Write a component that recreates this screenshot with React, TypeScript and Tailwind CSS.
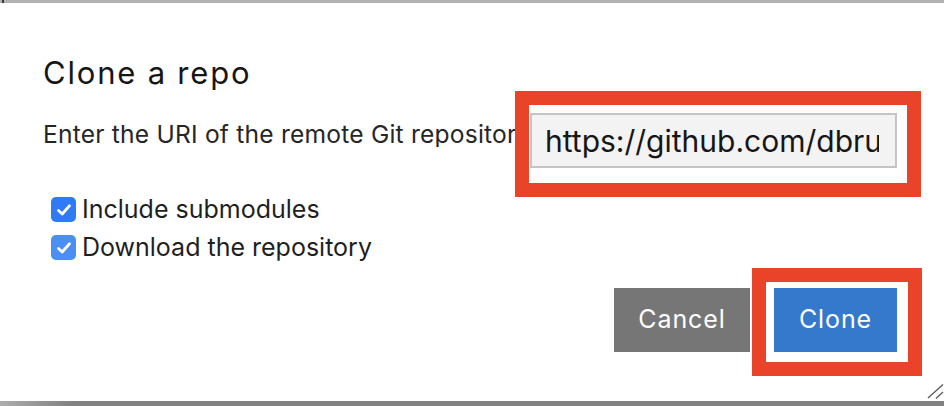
import React from "react";

const REPO_URL = "https://github.com/dbrunton/notebooks.git";

export default function App() {
  return (
    <div className="w-[944px] h-[406px] flex flex-col bg-white font-['Inter',sans-serif] overflow-hidden">
      {/* top edge of the window behind */}
      <div className="h-[3px] shrink-0 flex bg-[#b2b2b2]">
        <div className="w-[2px] ml-[2px] bg-[#3a3a3a]" />
      </div>

      {/* Dialog body */}
      <div className="relative flex-1 flex flex-col pl-[43px]">
        <h1 className="mt-[54px] text-[31px] leading-[31px] tracking-[1.8px] text-[#161616] font-normal">
          Clone a repo
        </h1>

        {/* URI row */}
        <div className="mt-[3px] flex items-start">
          <p className="w-[472px] shrink-0 overflow-hidden whitespace-nowrap mt-[31px] text-[24.6px] leading-[25px] tracking-[0.2px] text-[#262626]">
            Enter the URI of the remote Git repository:
          </p>
          <div className="border-[14px] border-[#e9432a] pl-[1px] pr-[10px] pt-[8px] pb-[15px]">
            <input
              readOnly
              value={REPO_URL}
              className="w-[367px] h-[55px] border-2 border-[#c4c4c4] bg-[#f3f3f3] pl-[13px] pr-[16px] text-[30px] text-[#161616] outline-none font-['Inter',sans-serif]"
            />
          </div>
        </div>

        {/* Options */}
        <div className="mt-0 ml-[8px] flex flex-col gap-[13px]">
          <CheckRow label="Include submodules" color="bg-[#2f7bf5]" />
          <CheckRow label="Download the repository" color="bg-[#4a8ef6]" />
        </div>

        {/* Actions */}
        <div className="mt-[8px] mr-[22px] flex justify-end items-start">
          <button className="mt-[20px] w-[136px] h-[64px] bg-[#767676] text-white text-[25px] tracking-[0.9px] font-['Inter',sans-serif]">
            Cancel
          </button>
          <div className="ml-[2px] border-[14px] border-[#e9432a] pl-[8px] pr-[11px] pt-[6px] pb-[10px]">
            <button className="w-[123px] h-[64px] bg-[#3579cd] text-white text-[25px] tracking-[0.9px] font-['Inter',sans-serif]">
              Clone
            </button>
          </div>
        </div>

        {/* resize grip */}
        <svg
          className="absolute right-0 bottom-[1px]"
          width="17"
          height="17"
          viewBox="0 0 17 17"
          fill="none"
        >
          <line x1="1" y1="15" x2="16" y2="1.5" stroke="#5a5a5a" strokeWidth="1.3" />
          <line x1="9" y1="15.5" x2="16" y2="9" stroke="#5a5a5a" strokeWidth="1.3" />
        </svg>
      </div>

      {/* bottom edge */}
      <div className="h-[5px] shrink-0 bg-[linear-gradient(to_right,#adadad,#828282_70px)]" />
    </div>
  );
}

function CheckRow({ label, color }: { label: string; color: string }) {
  return (
    <label className="flex items-center gap-[6px] h-[25px]">
      <span className={`w-[25px] h-[25px] rounded-[5px] flex items-center justify-center ${color}`}>
        <svg width="18" height="18" viewBox="0 0 18 18" fill="none">
          <path
            d="M3.5 9.5 L7.2 13 L14.5 4.8"
            stroke="white"
            strokeWidth="2.8"
            strokeLinecap="round"
            strokeLinejoin="round"
          />
        </svg>
      </span>
      <span className="text-[25px] leading-[25px] text-[#1f1f1f]">{label}</span>
    </label>
  );
}
